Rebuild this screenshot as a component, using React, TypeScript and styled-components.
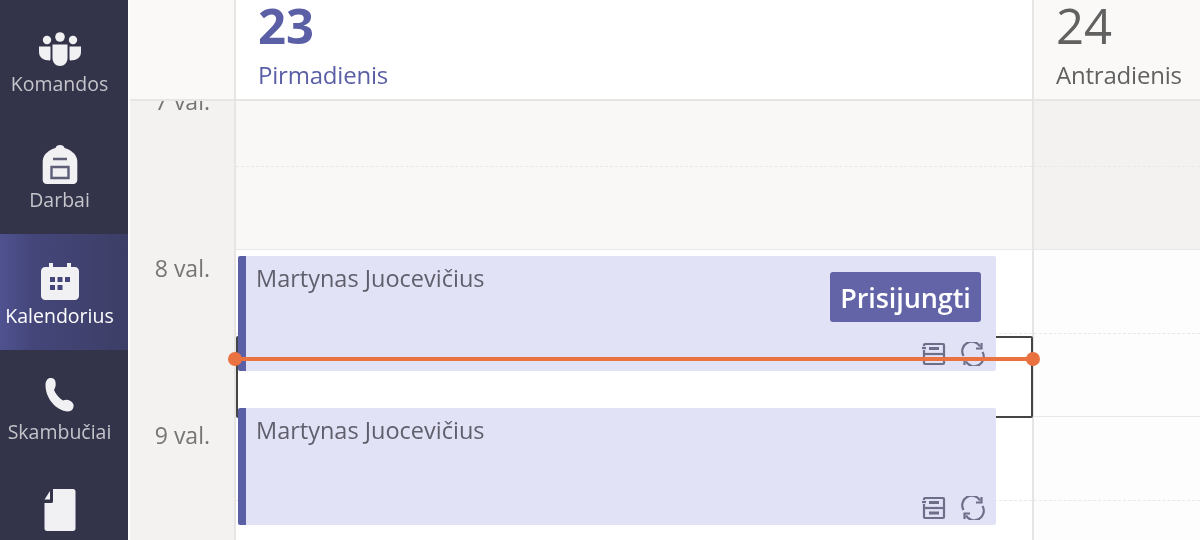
import React from 'react';
import styled, { createGlobalStyle } from 'styled-components';

const GlobalStyle = createGlobalStyle`
  html, body { margin: 0; padding: 0; background: #fff; }
  body { font-family: "Open Sans", "Noto Sans", sans-serif; }
`;

const Page = styled.div`
  width: 1200px;
  height: 540px;
  display: flex;
  overflow: hidden;
  background: #fff;
  filter: blur(0.7px);
`;

const Sidebar = styled.nav`
  width: 128px;
  flex: none;
  height: 540px;
  padding-top: 2px;
  box-sizing: border-box;
  overflow: hidden;
  background: #33344a;
  margin-right: 2px;
`;

const NavItem = styled.div<{ $active?: boolean }>`
  height: 116px;
  display: flex;
  flex-direction: column;
  align-items: center;
  padding: 27px 9px 0 0;
  box-sizing: border-box;
  color: ${p => (p.$active ? '#fff' : '#c4c4ca')};
  background: ${p => (p.$active ? 'linear-gradient(90deg, #4f5290 0%, #44467a 25%, #3d3e66 100%)' : 'transparent')};
`;

const NavIcon = styled.svg`
  width: 44px;
  height: 40px;
  flex: none;
  color: #f1f1f4;
`;

const TallNavIcon = styled(NavIcon)`
  height: 44px;
  margin-top: -5px;
  margin-bottom: 1px;
`;

const NavLabel = styled.span`
  margin-top: 3px;
  font-size: 19.5px;
  line-height: 24px;
  white-space: nowrap;
`;

const Main = styled.div`
  flex: 1;
  min-width: 0;
  display: flex;
  flex-direction: column;
`;

const Header = styled.header`
  height: 101px;
  flex: none;
  display: grid;
  grid-template-columns: 106px 798px 1fr;
  border-bottom: 2px solid #e6e5e4;
  box-sizing: border-box;
`;

const HeaderGap = styled.div`
  background: #faf9f8;
  border-right: 2px solid #e6e5e4;
`;

const DayHead = styled.div<{ $today?: boolean }>`
  padding: 1px 0 0 22px;
  background: ${p => (p.$today ? '#fff' : '#faf9f8')};
  border-right: ${p => (p.$today ? '2px solid #e6e5e4' : '0')};
  color: ${p => (p.$today ? '#5b5fa6' : '#616161')};
`;

const DayNumber = styled.div<{ $today?: boolean }>`
  font-size: 49px;
  line-height: 48px;
  font-weight: ${p => (p.$today ? 700 : 400)};
`;

const DayName = styled.div`
  margin-top: 12px;
  font-size: 24px;
  line-height: 28px;
  letter-spacing: -0.2px;
`;

const Viewport = styled.div`
  flex: 1;
  min-height: 0;
  overflow: hidden;
`;

const Grid = styled.div`
  display: grid;
  grid-template-columns: 106px 798px 1fr;
  margin-top: -18px;
`;

const TimeColumn = styled.div`
  background: #f3f2f1;
  border-right: 2px solid #e6e5e4;
`;

const TimeCell = styled.div`
  height: 167px;
  box-sizing: border-box;
  padding: 5px 24px 0 0;
  text-align: right;
  font-size: 23px;
  line-height: 26px;
  color: #757575;
`;

const DayColumn = styled.div<{ $today?: boolean }>`
  position: relative;
  z-index: ${p => (p.$today ? 1 : 0)};
  border-right: ${p => (p.$today ? '2px solid #e6e5e4' : '0')};
`;

const HourRow = styled.div<{ $bg: string }>`
  height: 167px;
  box-sizing: border-box;
  background: ${p => p.$bg};
  border-bottom: 1px solid #e9e8e7;
  position: relative;

  &::after {
    content: '';
    position: absolute;
    left: 0;
    right: 0;
    top: 83px;
    border-top: 1px dashed #e9e8e7;
  }
`;

const Selection = styled.div`
  position: absolute;
  left: 0;
  right: -1px;
  top: 253px;
  height: 82px;
  box-sizing: border-box;
  border: 2px solid #454545;
  border-radius: 2px;
`;

const EventCard = styled.div<{ $top: number; $height: number }>`
  position: absolute;
  left: 2px;
  width: 758px;
  top: ${p => p.$top}px;
  height: ${p => p.$height}px;
  box-sizing: border-box;
  padding: 7px 11px 5px 10px;
  display: flex;
  flex-direction: column;
  justify-content: space-between;
  background: #e2e2f6;
  border-left: 8px solid #5b5fa6;
  border-radius: 2px;
`;

const EventTop = styled.div`
  display: flex;
  justify-content: space-between;
  align-items: flex-start;
`;

const EventTitle = styled.div`
  font-size: 23.5px;
  line-height: 30px;
  color: #5f5f6c;
`;

const JoinButton = styled.button`
  margin: 9px 4px 0 0;
  width: 151px;
  height: 50px;
  padding: 0;
  border: 0;
  border-radius: 3px;
  background: #6264a7;
  color: #fff;
  font-family: inherit;
  font-size: 27px;
  font-weight: 600;
  letter-spacing: -0.1px;
`;

const EventIcons = styled.div`
  display: flex;
  justify-content: flex-end;
  gap: 14px;
  color: #6d6f8a;
`;

const NowLine = styled.div`
  position: absolute;
  left: -1px;
  right: -1px;
  top: 274px;
  height: 4px;
  background: #e97240;

  &::before,
  &::after {
    content: '';
    position: absolute;
    top: -5px;
    width: 14px;
    height: 14px;
    border-radius: 50%;
    background: #e97240;
  }
  &::before { left: -7px; }
  &::after { right: -7px; }
`;

const TeamsIcon = () => (
  <NavIcon viewBox="0 0 44 40" fill="currentColor">
    <circle cx="9" cy="11" r="4.2" />
    <circle cx="22" cy="8" r="4.8" />
    <circle cx="35" cy="11" r="4.2" />
    <path d="M1 17.500h11.500v11.500c0 1-.2 2-.5 2.500C5 31.500 1 28 1 23z" />
    <path d="M43 17.500H31.500V29c0 1 .2 2 .5 2.500 7 0 11-3.500 11-8.500z" />
    <path d="M14.500 15.500h15V29c0 4.500-3.300 8-7.500 8s-7.500-3.500-7.500-8z" />
  </NavIcon>
);

const BackpackIcon = () => (
  <NavIcon viewBox="0 0 44 40">
    <path fill="currentColor" d="M22 0c2.500 0 4 1 4.500 3C33 5 38 9 39 14c.2 1 .3 2 .3 3v18c0 2-1.500 4-4 4H8.700c-2.500 0-4-2-4-4V17c0-1 .1-2 .3-3C6 9 11 5 17.500 3 18 1 19.500 0 22 0z" />
    <path fill="none" stroke="#5d5e75" strokeWidth="2.400" d="M15 14h14M13.500 22h17v11h-17z" />
  </NavIcon>
);

const CalendarIcon = () => (
  <NavIcon viewBox="0 0 44 40">
    <path fill="currentColor" d="M7 6h30c2 0 4 2 4 4v25c0 2-2 4-4 4H7c-2 0-4-2-4-4V10c0-2 2-4 4-4z" />
    <path fill="currentColor" d="M11 2h4v6h-4zM29 2h4v6h-4z" />
    <path fill="#44467a" d="M12 16h5v5h-5zM19.500 16h5v5h-5zM27 16h5v5h-5zM12 24h5v5h-5zM19.500 24h5v5h-5z" />
  </NavIcon>
);

const PhoneIcon = () => (
  <NavIcon viewBox="0 0 44 40" fill="currentColor">
    <path d="M12 1c3-.5 5 1 5.500 4 .5 3 0 5.500-1.500 8 2 4.500 5 8 9 10.500 2.500-1 5-1 7.500.5 2.500 1.500 3.500 3.500 3 6-.5 3-3 4.500-6.500 4.500C17.500 33 7.500 21 7.500 8c0-3.500 1.500-6.500 4.500-7z" />
  </NavIcon>
);

const FileIcon = () => (
  <TallNavIcon viewBox="0 0 44 44" fill="currentColor">
    <path d="M15 1h20c1.500 0 2.500 1 2.500 2.500v37c0 1.500-1 2.500-2.500 2.500H9c-1.500 0-2.500-1-2.500-2.500V15H13c1.500 0 2-.5 2-2z" />
    <path d="M12 3v8.500H6.500z" />
  </TallNavIcon>
);

const SeriesIcon = () => (
  <svg width="26" height="24" viewBox="0 0 26 24" fill="none" stroke="currentColor" strokeWidth="2.200">
    <path d="M3 4V3c0-.5.5-1 1-1h18c.5 0 1 .5 1 1v18c0 .5-.5 1-1 1H4c-.5 0-1-.5-1-1V8" />
    <path d="M3 12h20" />
    <path d="M8 6.500h10M8 17h10" strokeWidth="2.800" />
    <path d="M1 6h4" />
  </svg>
);

const RepeatIcon = () => (
  <svg width="24" height="24" viewBox="0 0 24 24" fill="none" stroke="currentColor" strokeWidth="2.200">
    <path d="M2.500 14a9.500 9.500 0 0 1 16.500-9.500" />
    <path d="M21.500 10a9.500 9.500 0 0 1-16.500 9.500" />
    <path d="M20.500 1v5.500H15M3.500 23v-5.500H9" />
  </svg>
);

const navItems = [
  { label: 'Komandos', icon: <TeamsIcon /> },
  { label: 'Darbai', icon: <BackpackIcon /> },
  { label: 'Kalendorius', icon: <CalendarIcon />, active: true },
  { label: 'Skambučiai', icon: <PhoneIcon /> },
  { label: 'Failai', icon: <FileIcon /> },
];

const App: React.FC = () => {
  return (
    <Page>
      <GlobalStyle />
      <Sidebar>
        {navItems.map(item => (
          <NavItem key={item.label} $active={item.active}>
            {item.icon}
            <NavLabel>{item.label}</NavLabel>
          </NavItem>
        ))}
      </Sidebar>
      <Main>
        <Header>
          <HeaderGap />
          <DayHead $today>
            <DayNumber $today>23</DayNumber>
            <DayName>Pirmadienis</DayName>
          </DayHead>
          <DayHead>
            <DayNumber>24</DayNumber>
            <DayName>Antradienis</DayName>
          </DayHead>
        </Header>
        <Viewport>
          <Grid>
            <TimeColumn>
              <TimeCell>7 val.</TimeCell>
              <TimeCell>8 val.</TimeCell>
              <TimeCell>9 val.</TimeCell>
            </TimeColumn>
            <DayColumn $today>
              <HourRow $bg="#f9f8f7" />
              <HourRow $bg="#fff" />
              <HourRow $bg="#fff" />
              <Selection />
              <EventCard $top={173} $height={115}>
                <EventTop>
                  <EventTitle>Martynas Juocevičius</EventTitle>
                  <JoinButton>Prisijungti</JoinButton>
                </EventTop>
                <EventIcons>
                  <SeriesIcon />
                  <RepeatIcon />
                </EventIcons>
              </EventCard>
              <EventCard $top={325} $height={117}>
                <EventTop>
                  <EventTitle>Martynas Juocevičius</EventTitle>
                </EventTop>
                <EventIcons>
                  <SeriesIcon />
                  <RepeatIcon />
                </EventIcons>
              </EventCard>
              <NowLine />
            </DayColumn>
            <DayColumn>
              <HourRow $bg="#f3f2f1" />
              <HourRow $bg="#fdfdfd" />
              <HourRow $bg="#fdfdfd" />
            </DayColumn>
          </Grid>
        </Viewport>
      </Main>
    </Page>
  );
};

export default App;
